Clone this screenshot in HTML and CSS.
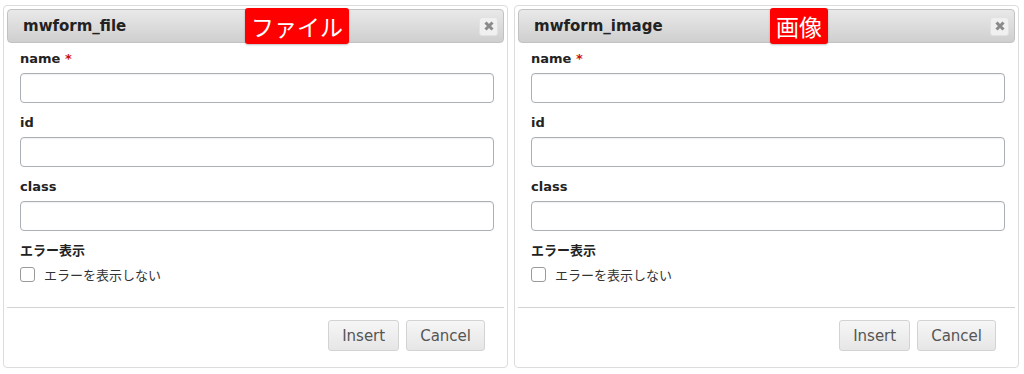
FILE: index.html
```html
<!DOCTYPE html>
<html lang="ja">

<head>
    <meta charset="UTF-8">
    <meta name="viewport" content="width=device-width, initial-scale=1.0">
    <title>mwform dialogs</title>
    <link rel="stylesheet" href="styles.css">
</head>

<body>
    <div class="dialogs">
        <div class="dialog">
            <div class="titlebar">
                <span class="title">mwform_file</span>
                <button class="close" type="button" aria-label="close">
                    <svg width="10" height="10" viewBox="0 0 10 10">
                        <path d="M1.5 1.5 L8.5 8.5 M8.5 1.5 L1.5 8.5" stroke="#8a8a8a" stroke-width="3"/>
                    </svg>
                </button>
            </div>
            <span class="tag">ファイル</span>
            <div class="content">
                <div class="field">
                    <label class="label">name <span class="req">*</span></label>
                    <input class="input" type="text">
                </div>
                <div class="field">
                    <label class="label">id</label>
                    <input class="input" type="text">
                </div>
                <div class="field">
                    <label class="label">class</label>
                    <input class="input" type="text">
                </div>
                <div class="field">
                    <label class="label">エラー表示</label>
                    <label class="check"><span class="box"></span>エラーを表示しない</label>
                </div>
            </div>
            <div class="buttons">
                <button class="btn" type="button">Insert</button>
                <button class="btn" type="button">Cancel</button>
            </div>
        </div>

        <div class="dialog">
            <div class="titlebar">
                <span class="title">mwform_image</span>
                <button class="close" type="button" aria-label="close">
                    <svg width="10" height="10" viewBox="0 0 10 10">
                        <path d="M1.5 1.5 L8.5 8.5 M8.5 1.5 L1.5 8.5" stroke="#8a8a8a" stroke-width="3"/>
                    </svg>
                </button>
            </div>
            <span class="tag tag-image">画像</span>
            <div class="content">
                <div class="field">
                    <label class="label">name <span class="req">*</span></label>
                    <input class="input" type="text">
                </div>
                <div class="field">
                    <label class="label">id</label>
                    <input class="input" type="text">
                </div>
                <div class="field">
                    <label class="label">class</label>
                    <input class="input" type="text">
                </div>
                <div class="field">
                    <label class="label">エラー表示</label>
                    <label class="check"><span class="box"></span>エラーを表示しない</label>
                </div>
            </div>
            <div class="buttons">
                <button class="btn" type="button">Insert</button>
                <button class="btn" type="button">Cancel</button>
            </div>
        </div>
    </div>
</body>

</html>
```

FILE: styles.css
```css
* {
    margin: 0;
    padding: 0;
    box-sizing: border-box;
}

body {
    font-family: "DejaVu Sans", "Noto Sans CJK JP", sans-serif;
    background-color: #fff;
    color: #222;
}

.dialogs {
    display: flex;
    gap: 6px;
    padding: 5px 0 0 3px;
}

.dialog {
    position: relative;
    width: 505px;
    height: 363px;
    border: 1px solid #dcdcdc;
    border-radius: 4px;
    padding: 3px;
    display: flex;
    flex-direction: column;
}

.titlebar {
    height: 34px;
    display: flex;
    align-items: center;
    justify-content: space-between;
    padding: 0 5px 0 15px;
    border: 1px solid #c2c2c2;
    border-radius: 4px;
    background: linear-gradient(#e9e9e9, #cfcfcf);
}

.title {
    font-size: 15px;
    font-weight: bold;
    color: #222;
}

.close {
    width: 19px;
    height: 19px;
    border: 1px solid #e2e2e2;
    border-radius: 3px;
    background-color: #f0f0f0;
    display: flex;
    align-items: center;
    justify-content: center;
}

.tag {
    position: absolute;
    top: 2px;
    left: 241px;
    height: 36px;
    line-height: 36px;
    padding: 0 6px;
    background-color: #ff0000;
    color: #fff;
    border-radius: 3px;
    font-family: "Noto Sans CJK JP", sans-serif;
    font-size: 23px;
    box-shadow: 0 1px 2px rgba(0, 0, 0, 0.25);
}

.tag-image {
    left: 255px;
}

.content {
    padding: 7px 10px 0 13px;
    flex: 1;
}

.field {
    display: flex;
    flex-direction: column;
    margin-bottom: 11px;
}

.label {
    font-size: 13px;
    font-weight: bold;
    line-height: 18px;
    margin-bottom: 5px;
    color: #222;
}

.req {
    color: #cc1111;
}

.input {
    height: 30px;
    border: 1px solid #aab0b6;
    border-radius: 4px;
    background-color: #fff;
    box-shadow: inset 0 1px 1px rgba(0, 0, 0, 0.06);
}

.check {
    display: flex;
    align-items: center;
    font-family: "Noto Sans CJK JP", sans-serif;
    font-size: 13px;
    line-height: 17px;
    color: #333;
    margin-top: 1px;
}

.box {
    width: 15px;
    height: 15px;
    border: 1px solid #9a9a9a;
    border-radius: 3px;
    background-color: #fff;
    margin-right: 9px;
}

.buttons {
    border-top: 1px solid #d3d3d3;
    display: flex;
    justify-content: flex-end;
    gap: 7px;
    padding: 12px 19px 13px 0;
}

.btn {
    height: 31px;
    padding: 0 13px;
    border: 1px solid #d3d3d3;
    border-radius: 3px;
    background: linear-gradient(#f6f6f6, #e6e6e6);
    font-family: "DejaVu Sans", sans-serif;
    font-size: 15px;
    color: #555;
}
```
